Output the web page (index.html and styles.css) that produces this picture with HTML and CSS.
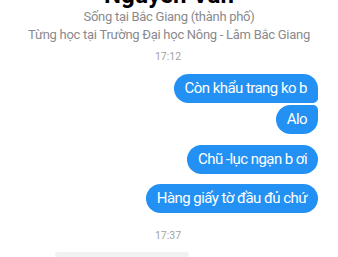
FILE: index.html
```html
<!DOCTYPE html>
<html lang="vi">
<head>
<meta charset="utf-8">
<link rel="stylesheet" href="styles.css">
</head>
<body>
<div class="screen">
  <div class="profile">
    <div class="name">Nguyễn Văn</div>
    <div class="info">Sống tại Bắc Giang (thành phố)</div>
    <div class="info">Từng học tại Trường Đại học Nông - Lâm Bắc Giang</div>
  </div>
  <div class="time t1">17:12</div>
  <div class="group g1">
    <div class="bubble first">Còn khẩu trang ko b</div>
    <div class="bubble last">Alo</div>
  </div>
  <div class="group g2">
    <div class="bubble">Chũ -lục ngạn b ơi</div>
  </div>
  <div class="group g3">
    <div class="bubble">Hàng giấy tờ đầu đủ chứ</div>
  </div>
  <div class="time t2">17:37</div>
  <div class="incoming"></div>
</div>
</body>
</html>
```

FILE: styles.css
```css
html, body {
  margin: 0;
  padding: 0;
  background: #ffffff;
}
.screen {
  width: 338px;
  height: 257px;
  overflow: hidden;
  font-family: Roboto, "Liberation Sans", Arial, sans-serif;
  display: flex;
  flex-direction: column;
}
.profile {
  display: flex;
  flex-direction: column;
  align-items: center;
  margin-top: -18px;
}
.name {
  font-size: 24px;
  font-weight: bold;
  color: #000;
  line-height: 26px;
}
.info {
  font-size: 13px;
  letter-spacing: -0.28px;
  color: #8a8a8e;
  line-height: 18px;
}
.time {
  font-size: 10.5px;
  color: #a3a3a3;
  text-align: center;
  line-height: 14px;
  padding-right: 2px;
}
.t1 { margin-top: 6px; }
.t2 { margin-top: 16px; }
.group {
  display: flex;
  flex-direction: column;
  align-items: flex-end;
  gap: 2px;
  padding-right: 20px;
}
.g1 { margin-top: 10px; }
.g2 { margin-top: 11px; }
.g3 { margin-top: 10px; }
.bubble {
  background: #2391f3;
  color: #ffffff;
  font-size: 15px;
  letter-spacing: -0.55px;
  height: 29px;
  line-height: 29px;
  padding: 0 11px;
  border-radius: 15px;
  white-space: nowrap;
}
.bubble.first { border-bottom-right-radius: 5px; }
.bubble.last { border-top-right-radius: 5px; }
.incoming {
  margin-top: 9px;
  margin-left: 55px;
  width: 134px;
  height: 30px;
  border-radius: 15px;
  background: #f1f1f1;
}
```
